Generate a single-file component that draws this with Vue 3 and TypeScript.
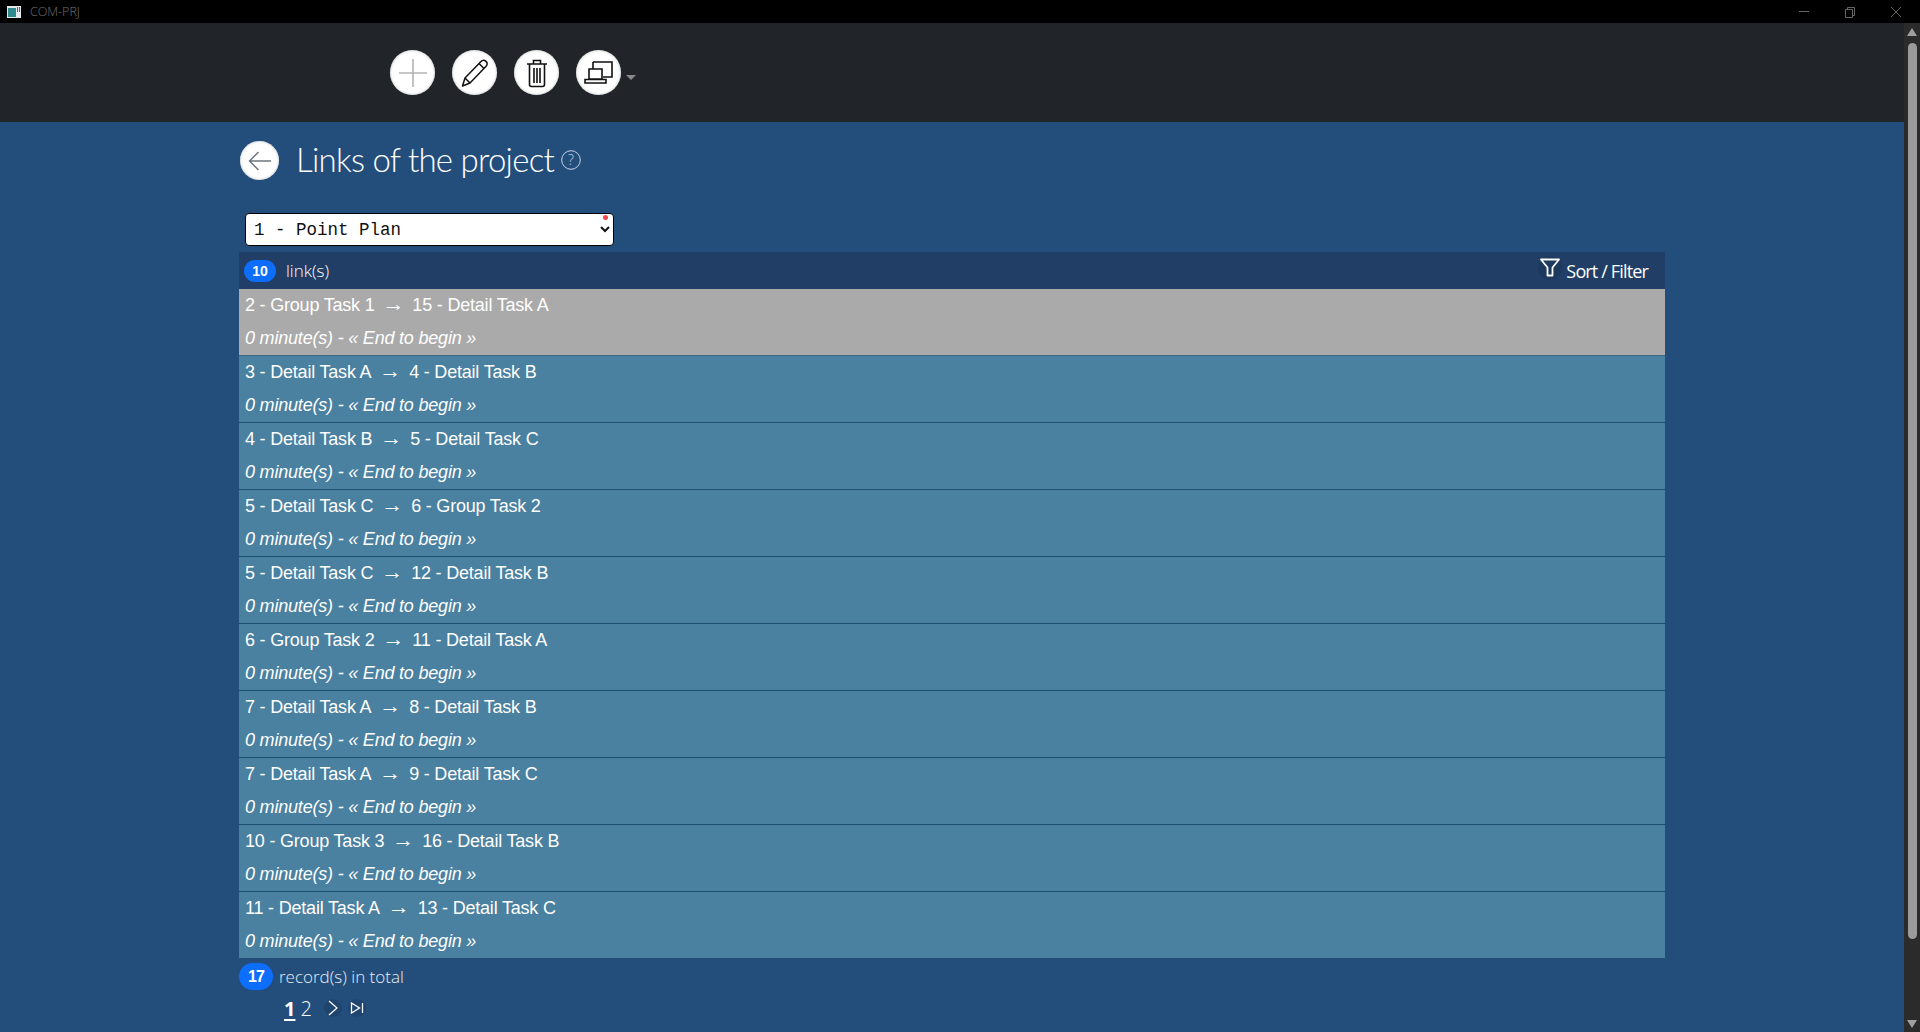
<script setup lang="ts">
interface Link {
  from: string
  to: string
  selected?: boolean
}
const links: Link[] = [
  { from: '2 - Group Task 1', to: '15 - Detail Task A', selected: true },
  { from: '3 - Detail Task A', to: '4 - Detail Task B' },
  { from: '4 - Detail Task B', to: '5 - Detail Task C' },
  { from: '5 - Detail Task C', to: '6 - Group Task 2' },
  { from: '5 - Detail Task C', to: '12 - Detail Task B' },
  { from: '6 - Group Task 2', to: '11 - Detail Task A' },
  { from: '7 - Detail Task A', to: '8 - Detail Task B' },
  { from: '7 - Detail Task A', to: '9 - Detail Task C' },
  { from: '10 - Group Task 3', to: '16 - Detail Task B' },
  { from: '11 - Detail Task A', to: '13 - Detail Task C' },
]
</script>

<template>
  <div class="window">
    <header class="titlebar">
      <div class="title-left">
        <svg class="app-icon" width="14" height="12" viewBox="0 0 14 12">
          <rect width="14" height="12" fill="#e4eaec" />
          <rect x="1" y="2" width="8" height="9" fill="#2f8a8f" />
          <rect x="10" y="1" width="1" height="5" fill="#55656b" />
          <rect x="12" y="1" width="1" height="5" fill="#55656b" />
        </svg>
        <span class="app-name">COM-PRJ</span>
      </div>
      <div class="win-controls">
        <svg width="12" height="12" viewBox="0 0 12 12"><path d="M1 5.500h10" stroke="#666" fill="none" /></svg>
        <svg width="12" height="12" viewBox="0 0 12 12"><path d="M1.500 3.500h7v8h-7zM3.500 3.500v-2h7v8h-2" stroke="#666" fill="none" /></svg>
        <svg width="12" height="12" viewBox="0 0 12 12"><path d="M1 1l10 10M11 1L1 11" stroke="#666" fill="none" /></svg>
      </div>
    </header>
    <div class="body">
      <div class="page">
        <nav class="toolbar">
          <button class="round tool" type="button">
            <svg width="30" height="30" viewBox="0 0 30 30"><path d="M15 1v28M1 15h28" stroke="#b4b4b4" stroke-width="1.600" fill="none" /></svg>
          </button>
          <button class="round tool" type="button">
            <svg width="32" height="32" viewBox="0 0 32 32"><path d="M6 21L22 4.500c1.500-1.600 3.500-1.500 5-.1s1.600 3.300.1 4.900L11 26l-7.500 3zM6 21l5 5M20 6.500l5 5" stroke="#111" stroke-width="1.500" fill="none" stroke-linejoin="round" /></svg>
          </button>
          <button class="round tool" type="button">
            <svg width="24" height="30" viewBox="0 0 24 30"><path d="M2 6h20M8.500 6V2.500h7V6M4.500 6v20.500a2 2 0 0 0 2 2h11a2 2 0 0 0 2-2V6M9 10v15M12 10v15M15 10v15" stroke="#111" stroke-width="1.600" fill="none" /></svg>
          </button>
          <button class="round tool" type="button">
            <svg width="30" height="24" viewBox="0 0 30 24"><path d="M9 1h19v15h-9M9 1v7M5 8h13v10H5zM1 22h21v-3.500H1z" stroke="#111" stroke-width="1.600" fill="none" /></svg>
          </button>
          <span class="caret"></span>
        </nav>
        <main class="content">
          <div class="heading">
            <button class="round back" type="button">
              <svg width="24" height="20" viewBox="0 0 24 20"><path d="M23 10H1.500M10.500 1l-9 9 9 9" stroke="#6c757d" stroke-width="1.500" fill="none" /></svg>
            </button>
            <h1>Links of the project</h1>
            <svg class="help" width="20" height="20" viewBox="0 0 20 20">
              <circle cx="10" cy="10" r="9.300" stroke="#c9d3df" fill="none" />
              <text x="10" y="15" text-anchor="middle" fill="#c9d3df" font-size="14" font-family="Open Sans, sans-serif" font-weight="300">?</text>
            </svg>
          </div>
          <div class="select-wrap">
            <select class="project-select">
              <option>1 - Point Plan</option>
            </select>
            <span class="required"></span>
          </div>
          <section class="list">
            <div class="list-head">
              <div class="count"><span class="pill small">10</span><span>link(s)</span></div>
              <div class="filter">
                <span class="halo">
                  <svg width="20" height="20" viewBox="0 0 20 20"><path d="M1 1.500h18l-6.500 8v8h-5v-8z" stroke="#fff" stroke-width="1.800" fill="none" stroke-linejoin="round" /></svg>
                </span>
                <span>Sort / Filter</span>
              </div>
            </div>
            <div v-for="(l, i) in links" :key="i" class="row" :class="{ selected: l.selected }">
              <div class="row-title">{{ l.from }}<span class="arrow">→</span>{{ l.to }}</div>
              <div class="row-sub">0 minute(s) - « End to begin »</div>
            </div>
          </section>
          <div class="total"><span class="pill big">17</span><span>record(s) in total</span></div>
          <div class="pager">
            <span class="current">1</span>
            <span class="page-two">2</span>
            <span class="halo">
              <svg width="12" height="16" viewBox="0 0 12 16"><path d="M2 1l8 7-8 7" stroke="#fff" stroke-width="1.200" fill="none" /></svg>
            </span>
            <span class="halo">
              <svg width="14" height="12" viewBox="0 0 14 12"><path d="M1.500 1l8 5-8 5zM12.500 1v10" stroke="#fff" stroke-width="1.300" fill="none" /></svg>
            </span>
          </div>
        </main>
      </div>
      <aside class="scrollbar">
        <span class="sb-up"></span>
        <span class="sb-thumb"></span>
        <span class="sb-down"></span>
      </aside>
    </div>
  </div>
</template>

<style>
html, body { margin: 0; overflow: hidden; background: #234e7c; }
</style>

<style scoped>
.window { width: 1920px; height: 1032px; display: flex; flex-direction: column; overflow: hidden; font-family: "Liberation Sans", Arial, sans-serif; }
.titlebar { height: 23px; background: #000; display: flex; justify-content: space-between; align-items: center; flex: none; }
.title-left { display: flex; align-items: center; padding-left: 7px; gap: 9px; }
.app-name { color: #6f6f6f; font: 300 12.500px "Open Sans", sans-serif; }
.win-controls { display: flex; gap: 34px; padding-right: 18px; }
.body { flex: 1; display: flex; min-height: 0; }
.page { flex: 1; min-width: 0; background: #234e7c; display: flex; flex-direction: column; }
.toolbar { height: 99px; flex: none; background: #212529; display: flex; align-items: center; padding-left: 390px; gap: 17px; }
.round { border: none; padding: 0; border-radius: 50%; background: #fff; display: flex; align-items: center; justify-content: center; box-shadow: inset 0 0 3px #bbb; }
.tool { width: 45px; height: 45px; }
.caret { width: 0; height: 0; border-left: 5px solid transparent; border-right: 5px solid transparent; border-top: 5px solid #8a8a8a; margin: 10px 0 0 -12px; }
.content { width: 1426px; margin-left: 239px; display: flex; flex-direction: column; }
.heading { display: flex; align-items: center; height: 39px; margin: 19px 0 0 1px; }
.back { width: 39px; height: 39px; margin-right: 17px; }
h1 { margin: -3px 0 0; color: #fff; font: 300 33px Lato, "Open Sans", sans-serif; letter-spacing: -0.750px; }
.help { margin: -1px 0 0 7px; }
.select-wrap { position: relative; width: 369px; margin: 33px 0 0 6px; }
.project-select { width: 369px; height: 33px; box-sizing: border-box; display: block; border: 1px solid #000; border-radius: 4px; background: #fff; color: #111; font: 17.500px "Liberation Mono", monospace; padding: 0 4px; }
.required { position: absolute; top: 2px; right: 6px; width: 5px; height: 5px; border-radius: 50%; background: #f04a4a; }
.list { margin-top: 6px; }
.list-head { height: 37px; background: #213f66; display: flex; justify-content: space-between; align-items: center; padding: 0 17px 0 5px; color: #fff; font: 300 17px "Open Sans", sans-serif; }
.count { display: flex; align-items: center; gap: 10px; }
.filter { display: flex; align-items: center; gap: 4px; font-weight: 500; font-size: 18px; letter-spacing: -0.850px; }
.filter .halo { margin-top: -5px; width: 24px; height: 24px; }
.halo { display: inline-flex; align-items: center; justify-content: center; width: 18px; height: 18px; border-radius: 50%; background: rgba(20, 40, 70, 0.25); }
.pill { background: #0d6efd; color: #fff; border-radius: 12px; display: inline-flex; align-items: center; justify-content: center; font-family: "Liberation Sans", sans-serif; font-weight: 700; }
.small { width: 32px; height: 22px; font-size: 14px; }
.big { width: 34px; height: 27px; font-size: 16px; border-radius: 14px; letter-spacing: -1px; }
.row { height: 66px; padding: 0 6px; background: #4a80a0; color: #fff; font-size: 18px; border-bottom: 1px solid #1f4f70; display: flex; flex-direction: column; }
.row.selected { background: #aaa; border-bottom-color: #3a6a88; }
.row-title { height: 33px; line-height: 32px; letter-spacing: -0.200px; }
.row-sub { height: 33px; line-height: 32px; font-style: italic; letter-spacing: -0.200px; }
.arrow { margin: 0 8px; font-family: "Liberation Serif", serif; font-size: 22px; line-height: 1; }
.total { display: flex; align-items: center; gap: 6px; margin-top: 4px; color: #e6edf5; font: 300 17px "Open Sans", sans-serif; }
.pager { display: flex; align-items: center; margin: 6px 0 0 45px; color: #fff; font: 300 20px "Open Sans", sans-serif; height: 24px; }
.current { font-weight: 700; text-decoration: underline; text-underline-offset: 3px; }
.page-two { margin: 0 12px 0 5px; }
.pager .halo + .halo { margin-left: 6px; }
.scrollbar { width: 16px; flex: none; background: #2b2b2b; position: relative; }
.sb-up, .sb-down { position: absolute; left: 3px; width: 0; height: 0; border-left: 5px solid transparent; border-right: 5px solid transparent; }
.sb-up { top: 5px; border-bottom: 8px solid #a0a0a0; }
.sb-down { bottom: 4px; border-top: 8px solid #a0a0a0; }
.sb-thumb { position: absolute; top: 20px; left: 4px; width: 9px; height: 896px; border-radius: 5px; background: #9b9b9b; }
</style>
